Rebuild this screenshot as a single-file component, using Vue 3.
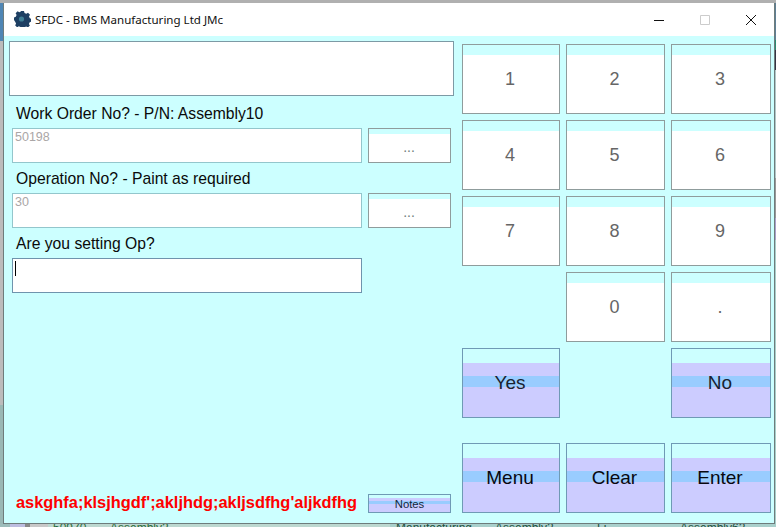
<script setup>
const keys = ['1','2','3','4','5','6','7','8','9']
const actions = ['Menu','Clear','Enter']
</script>

<template>
  <div class="screen">
    <div class="top-edge"></div>
    <div class="middle">
      <div class="left-edge"></div>
      <div class="window">
        <header class="titlebar">
          <svg class="logo" width="17" height="17" viewBox="0 0 17 17">
            <path fill="#1d3f63" d="M7 1h3l.5 2 1.8.8L14 2.8l2 2-1 1.7.8 1.8 1.7.6v2.8l-1.8.5-.8 1.8 1 1.6-2 1.9-1.7-1-1.7.7-.5 1.6H7l-.5-1.8-1.7-.7-1.7 1-2-2 1-1.6-.8-1.8L0 10.1V7.4l1.8-.6.8-1.8-1-1.7 2-2 1.7 1 1.2-.6z"/>
            <circle cx="7.5" cy="9" r="2.6" fill="#3f7f96"/>
          </svg>
          <span class="title">SFDC - BMS Manufacturing Ltd JMc</span>
          <div class="controls">
            <span class="ctl"><svg width="12" height="12" viewBox="0 0 12 12"><path d="M1 6.5h10" stroke="#111" fill="none"/></svg></span>
            <span class="ctl"><svg width="12" height="12" viewBox="0 0 12 12"><path d="M1.5 1.5h9v9h-9z" stroke="#ccc" fill="none"/></svg></span>
            <span class="ctl"><svg width="12" height="12" viewBox="0 0 12 12"><path d="M1 1l10 10M11 1L1 11" stroke="#111" fill="none"/></svg></span>
          </div>
        </header>
        <main class="body">
          <section class="form">
            <div class="message"></div>
            <label class="label">Work Order No? - P/N: Assembly10</label>
            <div class="row">
              <div class="field">50198</div>
              <button class="small">...</button>
            </div>
            <label class="label">Operation No? - Paint as required</label>
            <div class="row">
              <div class="field">30</div>
              <button class="small">...</button>
            </div>
            <label class="label">Are you setting Op?</label>
            <div class="row">
              <div class="field active"><span class="caret"></span></div>
            </div>
            <div class="footer">
              <span class="alert">askghfa;klsjhgdf';akljhdg;akljsdfhg'aljkdfhg</span>
              <button class="notes">Notes</button>
            </div>
          </section>
          <section class="pad">
            <div class="keys">
              <button v-for="k in keys" :key="k" class="key">{{ k }}</button>
              <button class="key zero">0</button>
              <button class="key">.</button>
              <button class="key action yes">Yes</button>
              <button class="key action no">No</button>
            </div>
            <div class="keys bottom">
              <button v-for="a in actions" :key="a" class="key action big">{{ a }}</button>
            </div>
          </section>
        </main>
      </div>
      <div class="right-edge"></div>
    </div>
    <div class="under">
      <span class="u1">50970</span><span class="u2">Assembly2</span><span class="u3">Manufacturing</span><span class="u4">Assembly2</span><span class="u5">Li</span><span class="u6">Assembly62</span>
    </div>
  </div>
</template>

<style scoped>
.screen {
  width: 776px;
  height: 527px;
  overflow: hidden;
  display: flex;
  flex-direction: column;
  background: #c8c8c8;
  font-family: "Liberation Sans", Arial, sans-serif;
}
.top-edge {
  height: 3px;
  background: #b0b0b0;
  flex: none;
}
.middle {
  display: flex;
  height: 521px;
  flex: none;
}
.left-edge {
  width: 3px;
  flex: none;
  background: linear-gradient(#4f86b5 0, #4f86b5 38px, #bcbcbc 38px, #bcbcbc 402px, #9ab8b5 402px);
}
.right-edge {
  width: 1px;
  flex: none;
  background: linear-gradient(#5f7f95 0, #5f7f95 37px, #2a8a70 37px, #2a8a70 47px, #334 47px, #334 67px, #b0c8c8 67px, #b0c8c8 175px, #999 175px, #999 215px, #a9a0cc 215px, #a9a0cc 237px, #a8cfca 237px);
}
.window {
  width: 772px;
  box-sizing: border-box;
  flex: none;
  display: flex;
  flex-direction: column;
  background: #ccffff;
  border: solid #6e7c7c;
  border-width: 0 1px 1px 1px;
}
.titlebar {
  height: 33px;
  flex: none;
  display: flex;
  align-items: center;
  background: #fff;
  padding-left: 10px;
}
.logo {
  flex: none;
  margin-top: -2px;
}
.title {
  margin-left: 4px;
  font-family: "Noto Sans", sans-serif;
  font-size: 11.55px;
  color: #111;
}
.controls {
  margin-left: auto;
  display: flex;
}
.ctl {
  width: 46px;
  height: 33px;
  display: flex;
  align-items: center;
  justify-content: center;
}
.body {
  flex: 1;
  display: flex;
  padding: 5px 2px 10px 5px;
  gap: 8px;
}
.form {
  width: 445px;
  flex: none;
  display: flex;
  flex-direction: column;
}
.message {
  height: 55px;
  margin-bottom: 2px;
  background: #fff;
  border: 1px solid #7d9aa5;
  box-sizing: border-box;
}
.label {
  display: block;
  height: 29px;
  padding: 1px 0 0 7px;
  line-height: 30px;
  font-size: 15.7px;
  color: #0a0a0a;
}
.row {
  display: flex;
  gap: 6px;
  height: 35px;
  padding-left: 3px;
}
.field {
  width: 350px;
  flex: none;
  box-sizing: border-box;
  background: #fff;
  border: 1px solid #93c6cc;
  padding: 1px 2px;
  font-size: 12.5px;
  line-height: 15px;
  color: #aaa6a6;
}
.field.active {
  border-color: #6f94ad;
}
.caret {
  display: block;
  width: 1px;
  height: 15px;
  margin-top: 1px;
  background: #000;
}
button {
  margin: 0;
  padding: 0;
  font-family: "Liberation Sans", Arial, sans-serif;
  box-sizing: border-box;
}
.small {
  width: 83px;
  flex: none;
  padding: 2px 1px 0 0;
  border: 1px solid #8f9c9c;
  background: linear-gradient(#ccffff 0, #ccffff 5px, #fff 5px);
  font-size: 14px;
  color: #6f7c7c;
}
.footer {
  margin-top: auto;
  display: flex;
  align-items: flex-end;
  gap: 11px;
  padding-left: 7px;
}
.alert {
  width: 341px;
  flex: none;
  white-space: nowrap;
  font-size: 16.4px;
  line-height: 19px;
  font-weight: bold;
  color: #f00;
  margin-bottom: 1px;
}
.notes {
  width: 83px;
  height: 19px;
  flex: none;
  border: 1px solid #6f9ab5;
  background: linear-gradient(#ccffff 0, #ccffff 3px, #ccccff 3px, #ccccff 6px, #99ccff 6px, #99ccff 9px, #ccccff 9px);
  font-size: 11.3px;
  color: #12263a;
}
.pad {
  width: 309px;
  flex: none;
  display: flex;
  flex-direction: column;
  padding-top: 3px;
}
.keys {
  display: grid;
  grid-template-columns: 98px 99px 100px;
  grid-auto-rows: 70px;
  gap: 6px;
}
.keys.bottom {
  margin-top: 25px;
}
.key {
  border: 1px solid #8f9c9c;
  padding-right: 2px;
  background: linear-gradient(#ccffff 0, #ccffff 10px, #fff 10px);
  font-size: 18px;
  color: #666;
}
.zero {
  grid-column: 2;
}
.action {
  border-color: #6f9ab5;
  background: linear-gradient(#ccffff 0, #ccffff 14px, #ccccff 14px, #ccccff 27px, #99ccff 27px, #99ccff 38px, #ccccff 38px);
  font-size: 19px;
  color: #1a2230;
}
.yes {
  grid-column: 1;
}
.no {
  grid-column: 3;
}
.big {
  color: #08080f;
}
.under {
  flex: 1;
  display: flex;
  background: linear-gradient(90deg, #9dbdbb 0, #9dbdbb 10px, #bdbde0 10px, #bdbde0 25px, #8a8a8a 25px, #8a8a8a 30px, #c8c8c8 30px, #c8c8c8 48px, #bcd8d0 48px, #bcd8d0 390px, #a9d0cc 390px);
  font-size: 12px;
  line-height: 9px;
  color: #2a6b3a;
  overflow: hidden;
  white-space: nowrap;
}
.u1 { margin-left: 53px; width: 57px; flex: none; }
.u2 { width: 286px; flex: none; }
.u3 { width: 99px; flex: none; color: #24503f; }
.u4 { width: 102px; flex: none; color: #24503f; }
.u5 { width: 83px; flex: none; color: #24503f; }
.u6 { flex: none; color: #24503f; }
</style>

<style>
html, body { margin: 0; overflow: hidden; }
</style>
